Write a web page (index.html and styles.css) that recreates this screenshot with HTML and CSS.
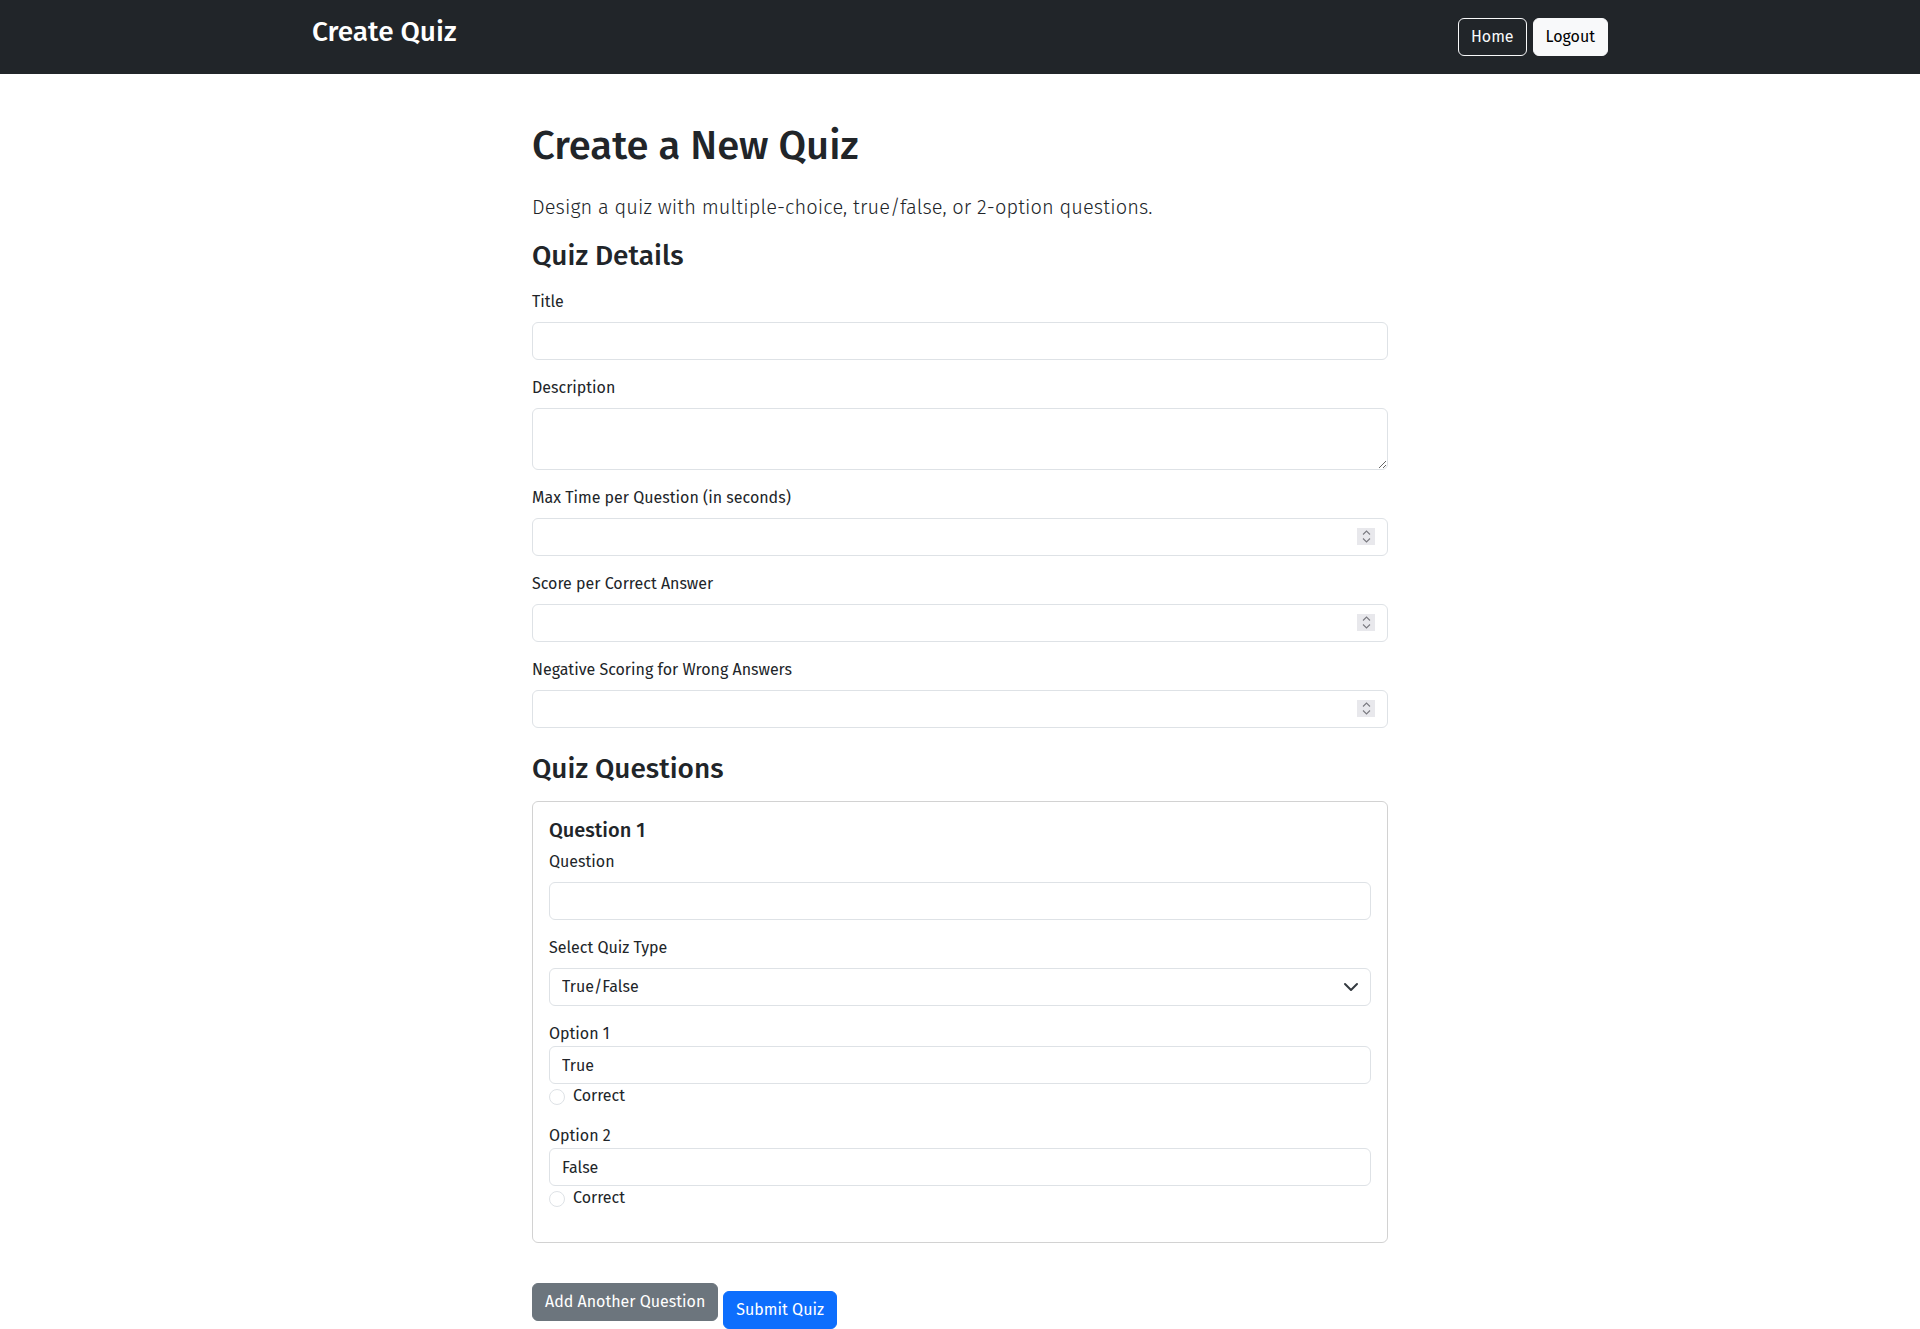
FILE: index.html
```html
<!DOCTYPE html>
<html lang="en">
<head>
<meta charset="utf-8">
<title>Create Quiz</title>
<link rel="stylesheet" href="styles.css">
</head>
<body>
<nav class="navbar">
  <div class="nav-inner">
    <span class="brand">Create Quiz</span>
    <div class="nav-actions">
      <a class="btn btn-outline-light">Home</a>
      <a class="btn btn-light">Logout</a>
    </div>
  </div>
</nav>
<main class="page">
  <h1 class="page-title">Create a New Quiz</h1>
  <p class="lead">Design a quiz with multiple-choice, true/false, or 2-option questions.</p>
  <form class="quiz-form">
    <h3 class="section-title">Quiz Details</h3>
    <div class="field">
      <label class="form-label">Title</label>
      <input class="form-control" type="text">
    </div>
    <div class="field">
      <label class="form-label">Description</label>
      <textarea class="form-control" rows="2"></textarea>
    </div>
    <div class="field">
      <label class="form-label">Max Time per Question (in seconds)</label>
      <div class="number-wrap">
        <input class="form-control" type="number">
        <span class="spin"><svg width="18" height="17" viewBox="0 0 18 17"><path d="M6 6.5 9.5 3 13 6.5M6 10.5 9.5 14 13 10.5" fill="none" stroke="#7a7a80" stroke-width="1.1"/></svg></span>
      </div>
    </div>
    <div class="field">
      <label class="form-label">Score per Correct Answer</label>
      <div class="number-wrap">
        <input class="form-control" type="number">
        <span class="spin"><svg width="18" height="17" viewBox="0 0 18 17"><path d="M6 6.5 9.5 3 13 6.5M6 10.5 9.5 14 13 10.5" fill="none" stroke="#7a7a80" stroke-width="1.1"/></svg></span>
      </div>
    </div>
    <div class="field">
      <label class="form-label">Negative Scoring for Wrong Answers</label>
      <div class="number-wrap">
        <input class="form-control" type="number">
        <span class="spin"><svg width="18" height="17" viewBox="0 0 18 17"><path d="M6 6.5 9.5 3 13 6.5M6 10.5 9.5 14 13 10.5" fill="none" stroke="#7a7a80" stroke-width="1.1"/></svg></span>
      </div>
    </div>

    <h3 class="section-title questions-title">Quiz Questions</h3>
    <div class="card">
      <h5 class="card-title">Question 1</h5>
      <div class="field">
        <label class="form-label">Question</label>
        <input class="form-control" type="text">
      </div>
      <div class="field">
        <label class="form-label">Select Quiz Type</label>
        <div class="select-wrap">
          <select class="form-control form-select">
            <option>True/False</option>
            <option>Multiple Choice</option>
            <option>2 Options</option>
          </select>
          <svg class="select-arrow" width="16" height="16" viewBox="0 0 16 16"><path d="m2 5 6 6 6-6" fill="none" stroke="#343a40" stroke-width="2" stroke-linecap="round" stroke-linejoin="round"/></svg>
        </div>
      </div>
      <div class="option">
        <label class="option-label">Option 1</label>
        <input class="form-control" type="text" value="True">
        <label class="form-check"><input class="form-check-input" type="radio" name="correct"><span>Correct</span></label>
      </div>
      <div class="option">
        <label class="option-label">Option 2</label>
        <input class="form-control" type="text" value="False">
        <label class="form-check"><input class="form-check-input" type="radio" name="correct"><span>Correct</span></label>
      </div>
    </div>

    <div class="actions">
      <button type="button" class="btn btn-secondary">Add Another Question</button>
      <button type="submit" class="btn btn-primary submit-btn">Submit Quiz</button>
    </div>
  </form>
</main>
</body>
</html>
```

FILE: styles.css
```css
* { box-sizing: border-box; }

body {
  margin: 0;
  font-family: "Fira Sans", Roboto, "Noto Sans", sans-serif;
  font-size: 16px;
  line-height: 1.5;
  color: #212529;
  background: #fff;
}

.navbar {
  background: #212529;
  height: 74px;
}

.nav-inner {
  width: 1296px;
  margin: 0 auto;
  height: 100%;
  display: flex;
  align-items: center;
  justify-content: space-between;
}

.brand {
  color: #fff;
  font-size: 28px;
  font-weight: 500;
  line-height: 42px;
  margin-bottom: 11px;
}

.nav-actions {
  display: flex;
  gap: 6px;
}

.btn {
  display: inline-block;
  font-family: inherit;
  font-size: 16px;
  font-weight: 400;
  line-height: 24px;
  padding: 6px 12px;
  border: 1px solid transparent;
  border-radius: 6px;
  text-decoration: none;
  cursor: pointer;
}

.btn-outline-light {
  color: #f8f9fa;
  border-color: #f8f9fa;
}

.btn-light {
  background: #f8f9fa;
  border-color: #f8f9fa;
  color: #000;
}

.btn-secondary {
  background: #6c757d;
  border-color: #6c757d;
  color: #fff;
}

.btn-primary {
  background: #0d6efd;
  border-color: #0d6efd;
  color: #fff;
}

.page {
  width: 856px;
  margin: 48px auto 0;
}

.page-title {
  font-size: 40px;
  font-weight: 500;
  line-height: 1.2;
  margin: 0 0 22px;
}

.lead {
  font-size: 20px;
  font-weight: 300;
  letter-spacing: 0.1px;
  margin: 0 0 17px;
}

.section-title {
  font-size: 28px;
  font-weight: 500;
  line-height: 1.2;
  margin: 0 0 17px;
}

.questions-title {
  margin-top: 24px;
  margin-bottom: 16px;
}

.field {
  margin-bottom: 16px;
}

.form-label {
  display: block;
  margin-bottom: 8px;
}

.option-label {
  display: block;
  margin-bottom: 0;
}

.form-control {
  display: block;
  width: 100%;
  padding: 6px 12px;
  font-family: inherit;
  font-size: 16px;
  line-height: 24px;
  color: #212529;
  background: #fff;
  border: 1px solid #dee2e6;
  border-radius: 6px;
  outline: none;
}

input.form-control {
  height: 38px;
}

input[type="number"] {
  -moz-appearance: textfield;
}

input[type="number"]::-webkit-inner-spin-button,
input[type="number"]::-webkit-outer-spin-button {
  -webkit-appearance: none;
  margin: 0;
}

.number-wrap {
  position: relative;
}

.spin {
  position: absolute;
  right: 13px;
  top: 10px;
  width: 18px;
  height: 17px;
  background: #e8e8ec;
  display: flex;
  pointer-events: none;
}

.select-wrap {
  position: relative;
}

.form-select {
  appearance: none;
  -webkit-appearance: none;
  height: 38px;
  padding-right: 36px;
}

.select-arrow {
  position: absolute;
  right: 12px;
  top: 11px;
  pointer-events: none;
}

.card {
  border: 1px solid rgba(0, 0, 0, 0.175);
  border-radius: 6px;
  padding: 16px;
  margin-bottom: 40px;
}

.card-title {
  font-size: 20px;
  font-weight: 500;
  line-height: 1.2;
  margin: 0 0 8px;
}

.option {
  margin-bottom: 16px;
}

.form-check {
  display: flex;
  align-items: flex-start;
  min-height: 24px;
}

.form-check-input {
  appearance: none;
  -webkit-appearance: none;
  width: 16px;
  height: 16px;
  margin: 5px 8px 0 0;
  border: 1px solid #dee2e6;
  border-radius: 50%;
  background: #fff;
  flex-shrink: 0;
}

.actions {
  display: flex;
  align-items: flex-start;
  gap: 5px;
}

.submit-btn {
  margin-top: 8px;
}
```
